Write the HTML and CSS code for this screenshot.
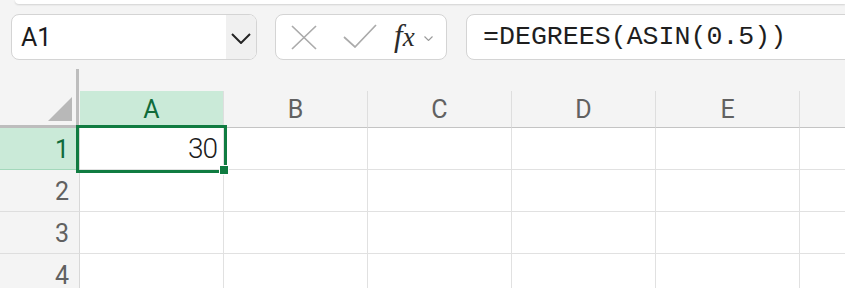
FILE: index.html
```html
<!DOCTYPE html>
<html>
<head>
<meta charset="utf-8">
<link rel="stylesheet" href="styles.css">
</head>
<body>
<div class="topbar"></div>
<div class="fbar">
  <div class="namebox">
    <span class="name">A1</span>
    <span class="ddbtn"><svg width="20" height="11" viewBox="0 0 20 11"><polyline points="1,1 10,10 19,1" fill="none" stroke="#242424" stroke-width="2"/></svg></span>
  </div>
  <div class="btnbox">
    <svg class="ico-x" width="26" height="25" viewBox="0 0 26 25"><path d="M1 1 L25 24 M25 1 L1 24" stroke="#ababab" stroke-width="1.7" fill="none"/></svg>
    <svg class="ico-ok" width="34" height="24" viewBox="0 0 34 24"><polyline points="1,13 12,23 33,1" stroke="#ababab" stroke-width="1.7" fill="none"/></svg>
    <span class="fx"><span class="fx-f">f</span><span class="fx-x">x</span></span>
    <svg class="ico-dd" width="9" height="5" viewBox="0 0 9 5"><polyline points="0.5,0.5 4.5,4.5 8.5,0.5" stroke="#9a9a9a" stroke-width="1.1" fill="none"/></svg>
  </div>
  <div class="formula">=DEGREES(ASIN(0.5))</div>
</div>
<div class="splitter"><div class="vline"></div></div>
<div class="sheet">
  <div class="corner"><div class="tri"></div></div>
  <div class="ch sel">A</div>
  <div class="ch">B</div>
  <div class="ch">C</div>
  <div class="ch">D</div>
  <div class="ch">E</div>
  <div class="ch last"></div>

  <div class="rh sel">1</div>
  <div class="cell num">30</div>
  <div class="cell"></div><div class="cell"></div><div class="cell"></div><div class="cell"></div><div class="cell last"></div>

  <div class="rh">2</div>
  <div class="cell"></div><div class="cell"></div><div class="cell"></div><div class="cell"></div><div class="cell"></div><div class="cell last"></div>

  <div class="rh">3</div>
  <div class="cell"></div><div class="cell"></div><div class="cell"></div><div class="cell"></div><div class="cell"></div><div class="cell last"></div>

  <div class="rh">4</div>
  <div class="cell"></div><div class="cell"></div><div class="cell"></div><div class="cell"></div><div class="cell"></div><div class="cell last"></div>

  <div class="selection"><div class="handle"></div></div>
</div>
</body>
</html>
```
FILE: styles.css
```css
html, body {
  margin: 0;
  padding: 0;
  background: #f4f4f4;
  overflow: hidden;
  font-family: Roboto, "Noto Sans", sans-serif;
}
.topbar {
  height: 4px;
  margin-left: 15px;
  background: #ffffff;
  border-bottom-left-radius: 7px;
  box-shadow: 0 1px 2px rgba(0,0,0,0.14);
}
.fbar {
  display: flex;
  margin-top: 10px;
  height: 46px;
  padding-left: 11px;
  gap: 18px;
}
.namebox, .btnbox, .formula {
  box-sizing: border-box;
  height: 46px;
  border: 1.5px solid #d4d4d4;
  border-radius: 8px;
  background: #ffffff;
  overflow: hidden;
}
.namebox {
  width: 246px;
  display: flex;
  align-items: stretch;
}
.name {
  flex: 1;
  display: flex;
  align-items: center;
  padding-left: 9px;
  font-size: 25px;
  color: #1b1b1b;
}
.ddbtn {
  width: 30px;
  background: #f0f0f0;
  display: flex;
  align-items: center;
  justify-content: center;
}
.ddbtn svg { margin-top: 2px; }
.btnbox {
  width: 172px;
  display: flex;
  align-items: center;
  position: relative;
}
.ico-x { margin-left: 15px; }
.ico-ok { margin-left: 26px; margin-top: -2px; }
.fx {
  margin-left: 17px;
  font-family: "Liberation Serif", serif;
  font-style: italic;
  color: #2b2b2b;
  display: flex;
  align-items: baseline;
  margin-top: -3px;
}
.fx-f { font-size: 31px; }
.fx-x { font-size: 27px; margin-left: 0px; }
.ico-dd { margin-left: 9px; margin-top: 2px; }
.formula {
  flex: 1;
  margin-left: 1px;
  margin-right: -20px;
  display: flex;
  align-items: center;
  padding-left: 16px;
  font-family: "Liberation Mono", "DejaVu Sans Mono", monospace;
  font-size: 26.6px;
  color: #1e1e1e;
}
.splitter {
  height: 31px;
  box-sizing: border-box;
  padding-top: 9px;
}
.vline {
  margin-left: 76px;
  width: 3px;
  height: 22px;
  background: #bdbdbd;
}
.sheet {
  position: relative;
  display: grid;
  grid-template-columns: 80px repeat(5, 144px) 1fr;
  grid-template-rows: 37px repeat(4, 42px);
}
.corner {
  box-sizing: border-box;
  margin-right: 1px;
  border-right: 3px solid #bdbdbd;
  border-bottom: 3px solid #bdbdbd;
  position: relative;
}
.tri {
  position: absolute;
  right: 4px;
  bottom: 4px;
  width: 0;
  height: 0;
  border-left: 24px solid transparent;
  border-bottom: 24px solid #b8b8b8;
}
.ch {
  box-sizing: border-box;
  border-right: 1px solid #dedede;
  border-bottom: 1px solid #c4c4c4;
  display: flex;
  align-items: center;
  justify-content: center;
  font-size: 25px;
  color: #616161;
  padding-top: 1px;
}
.ch.sel {
  background: #caead8;
  color: #0f6b3a;
}
.ch.last, .cell.last { border-right: none; }
.rh {
  box-sizing: border-box;
  border-right: 1px solid #d8d8d8;
  border-bottom: 1px solid #dedede;
  display: flex;
  align-items: center;
  justify-content: flex-end;
  padding-right: 10px;
  padding-top: 2px;
  font-size: 25px;
  color: #616161;
}
.rh.sel {
  background: #caead8;
  color: #0f6b3a;
  border-bottom-color: #a3d8bb;
}
.cell {
  box-sizing: border-box;
  background: #ffffff;
  border-right: 1px solid #e1e1e1;
  border-bottom: 1px solid #e1e1e1;
}
.num {
  display: flex;
  align-items: center;
  justify-content: flex-end;
  padding-right: 6px;
  font-size: 28px;
  font-weight: 300;
  letter-spacing: -1px;
  color: #1b1b1b;
}
.selection {
  position: absolute;
  left: 76px;
  top: 34px;
  width: 151px;
  height: 48px;
  box-sizing: border-box;
  border: 3px solid #107c41;
}
.handle {
  position: absolute;
  right: -5px;
  bottom: -5px;
  width: 8px;
  height: 8px;
  background: #107c41;
  border: 1px solid #ffffff;
}
```
